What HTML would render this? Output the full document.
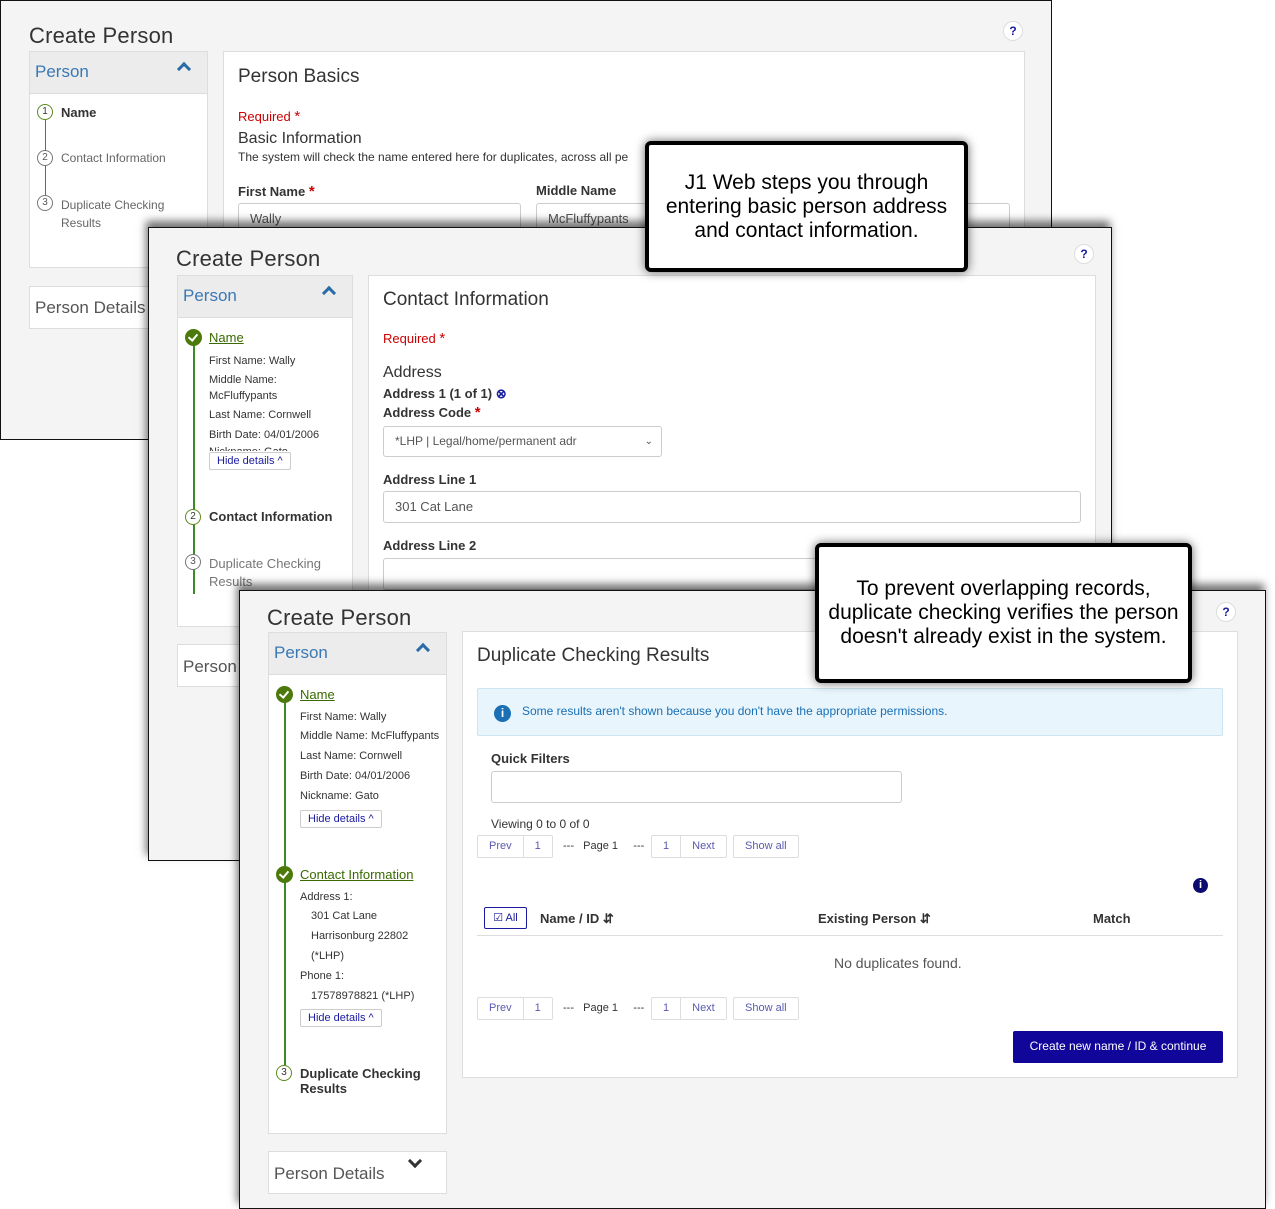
<!DOCTYPE html>
<html><head><meta charset="utf-8"><style>
*{box-sizing:border-box;margin:0;padding:0}
body{width:1275px;height:1208px;background:#fff;position:relative;overflow:hidden;font-family:"Liberation Sans",sans-serif;color:#333}
.a{position:absolute;white-space:nowrap}
.panel{position:absolute;background:#f4f4f4;border:1px solid #111;overflow:hidden}
.sh{box-shadow:-2px -6px 8px rgba(0,0,0,.55)}
.title{font-size:22px;color:#333;letter-spacing:.2px}
.side{position:absolute;background:#fff;border:1px solid #ddd}
.sideh{position:absolute;left:0;right:0;top:0;height:42px;background:#ececec;border-bottom:1px solid #ddd}
.sideh span{position:absolute;left:5px;top:10px;font-size:17px;color:#3a78b5}
.car{position:absolute;right:18px;top:12px;width:10px;height:10px;border-left:3px solid #2a6aa8;border-top:3px solid #2a6aa8;transform:rotate(45deg)}
.card{position:absolute;background:#fff;border:1px solid #ddd}
.h2{font-size:19px;color:#333}
.lbl{font-size:13px;font-weight:bold;color:#333}
.inp{position:absolute;background:#fff;border:1px solid #ccc;border-radius:3px;font-size:13px;color:#555;padding-left:11px}
.req{color:#c00;font-size:13px}
.q{position:absolute;width:20px;height:20px;border-radius:50%;background:#fff;border:1px solid #ddd;color:#1a1aa0;font-weight:bold;font-size:12px;text-align:center;line-height:18px}
.num{position:absolute;width:16px;height:16px;border-radius:50%;border:1.5px solid #777;font-size:10px;text-align:center;line-height:13px;color:#555;background:#fff}
.numg{border-color:#5a8a1a;color:#333}
.chk{position:absolute;width:17px;height:17px;border-radius:50%;background:#4b7a0a}
.chk:after{content:"";position:absolute;left:5px;top:3px;width:4px;height:7px;border-right:2.5px solid #fff;border-bottom:2.5px solid #fff;transform:rotate(40deg)}
.vl{position:absolute;width:2px;background:#3a8a2a}
.sm{font-size:11px;color:#333}
.lnk{color:#3a6a00;text-decoration:underline;font-size:13px}
.hd{position:absolute;border:1px solid #ccc;border-radius:2px;background:#fff;font-size:11px;color:#1a1aa0;padding:2px 7px;white-space:nowrap}
.pd{position:absolute;background:#fff;border:1px solid #ddd;font-size:17px;color:#555}
.callout{position:absolute;background:#fff;border:4px solid #000;border-radius:6px;box-shadow:0 0 10px rgba(0,0,0,.6);font-size:21px;color:#000;text-align:center;line-height:24px;display:flex;align-items:center;justify-content:center}
.pg{position:absolute;height:23px;border:1px solid #ddd;border-radius:2px;background:#fff;font-size:11px;color:#5a5ab0;display:flex}
.pg span{padding:0 11px;line-height:21px;border-right:1px solid #ddd}
.pg span:last-child{border-right:0}
</style></head><body>

<!-- PANEL 1 -->
<div class="panel" style="left:0;top:0;width:1052px;height:440px">
 <div class="a title" style="left:28px;top:22px">Create Person</div>
 <div class="q" style="left:1002px;top:20px">?</div>
 <div class="side" style="left:28px;top:50px;width:179px;height:217px">
  <div class="sideh"><span>Person</span><div class="car"></div></div>
  <div class="vl" style="left:15px;top:68px;height:90px;width:1px"></div>
  <div class="num numg" style="left:7px;top:52px">1</div>
  <div class="a" style="left:31px;top:53px;font-size:13px;font-weight:bold">Name</div>
  <div class="num" style="left:7px;top:98px">2</div>
  <div class="a" style="left:31px;top:99px;font-size:12px;color:#666">Contact Information</div>
  <div class="num" style="left:7px;top:143px">3</div>
  <div class="a" style="left:31px;top:144px;font-size:12px;color:#666;line-height:18px">Duplicate Checking<br>Results</div>
 </div>
 <div class="pd" style="left:28px;top:285px;width:130px;height:43px"><span class="a" style="left:5px;top:11px">Person Details</span></div>
 <div class="card" style="left:222px;top:50px;width:802px;height:400px">
  <div class="a h2" style="left:14px;top:14px">Person Basics</div>
  <div class="a req" style="left:14px;top:56px">Required <span style="font-size:15px">*</span></div>
  <div class="a" style="left:14px;top:78px;font-size:16px">Basic Information</div>
  <div class="a" style="left:14px;top:98px;font-size:12px">The system will check the name entered here for duplicates, across all pe</div>
  <div class="a lbl" style="left:14px;top:131px">First Name <span class="req" style="font-size:15px">*</span></div>
  <div class="a lbl" style="left:312px;top:131px">Middle Name</div>
  <div class="inp" style="left:14px;top:151px;width:283px;height:32px;line-height:30px">Wally</div>
  <div class="inp" style="left:312px;top:151px;width:474px;height:32px;line-height:30px">McFluffypants</div>
 </div>
</div>

<!-- PANEL 2 -->
<div class="panel sh" style="left:148px;top:227px;width:964px;height:634px">
 <div class="a title" style="left:27px;top:18px">Create Person</div>
 <div class="q" style="left:925px;top:16px">?</div>
 <div class="side" style="left:28px;top:47px;width:176px;height:352px">
  <div class="sideh"><span>Person</span><div class="car"></div></div>
  <div class="vl" style="left:15px;top:68px;height:250px"></div>
  <div class="chk" style="left:7px;top:53px"></div>
  <div class="a lnk" style="left:31px;top:54px">Name</div>
  <div class="a sm" style="left:31px;top:77px;line-height:16px">First Name: Wally</div>
  <div class="a sm" style="left:31px;top:96px;line-height:16px">Middle Name:<br>McFluffypants</div>
  <div class="a sm" style="left:31px;top:133px">Last Name: Cornwell</div>
  <div class="a sm" style="left:31px;top:153px">Birth Date: 04/01/2006</div>
  <div class="a sm" style="left:31px;top:170px;height:5px;overflow:hidden">Nickname: Gato</div>
  <div class="hd" style="left:31px;top:176px">Hide details ^</div>
  <div class="num numg" style="left:7px;top:233px">2</div>
  <div class="a" style="left:31px;top:233px;font-size:13px;font-weight:bold">Contact Information</div>
  <div class="num" style="left:7px;top:278px">3</div>
  <div class="a" style="left:31px;top:279px;font-size:13px;color:#777;line-height:18px">Duplicate Checking<br>Results</div>
 </div>
 <div class="pd" style="left:28px;top:416px;width:100px;height:43px"><span class="a" style="left:5px;top:12px">Person</span></div>
 <div class="card" style="left:219px;top:47px;width:728px;height:600px">
  <div class="a h2" style="left:14px;top:13px">Contact Information</div>
  <div class="a req" style="left:14px;top:54px">Required <span style="font-size:15px">*</span></div>
  <div class="a" style="left:14px;top:88px;font-size:16px">Address</div>
  <div class="a lbl" style="left:14px;top:110px">Address 1 (1 of 1) <span style="color:#1a1aa0">&#8855;</span></div>
  <div class="a lbl" style="left:14px;top:128px">Address Code <span class="req" style="font-size:15px">*</span></div>
  <div class="inp" style="left:14px;top:150px;width:279px;height:31px;line-height:29px;font-size:12px">*LHP | Legal/home/permanent adr<span class="a" style="right:8px;top:0;font-size:10px">&#8964;</span></div>
  <div class="a lbl" style="left:14px;top:196px">Address Line 1</div>
  <div class="inp" style="left:14px;top:215px;width:698px;height:32px;line-height:30px">301 Cat Lane</div>
  <div class="a lbl" style="left:14px;top:262px">Address Line 2</div>
  <div class="inp" style="left:14px;top:282px;width:698px;height:32px"></div>
 </div>
</div>

<!-- PANEL 3 -->
<div class="panel sh" style="left:239px;top:590px;width:1027px;height:619px">
 <div class="a title" style="left:27px;top:14px">Create Person</div>
 <div class="q" style="left:976px;top:11px">?</div>
 <div class="side" style="left:28px;top:41px;width:179px;height:502px">
  <div class="sideh"><span>Person</span><div class="car"></div></div>
  <div class="vl" style="left:15px;top:68px;height:372px"></div>
  <div class="chk" style="left:7px;top:53px"></div>
  <div class="a lnk" style="left:31px;top:54px">Name</div>
  <div class="a sm" style="left:31px;top:78px">First Name: Wally</div>
  <div class="a sm" style="left:31px;top:97px">Middle Name: McFluffypants</div>
  <div class="a sm" style="left:31px;top:117px">Last Name: Cornwell</div>
  <div class="a sm" style="left:31px;top:137px">Birth Date: 04/01/2006</div>
  <div class="a sm" style="left:31px;top:157px">Nickname: Gato</div>
  <div class="hd" style="left:31px;top:177px">Hide details ^</div>
  <div class="chk" style="left:7px;top:233px"></div>
  <div class="a lnk" style="left:31px;top:234px">Contact Information</div>
  <div class="a sm" style="left:31px;top:258px">Address 1:</div>
  <div class="a sm" style="left:42px;top:277px">301 Cat Lane</div>
  <div class="a sm" style="left:42px;top:297px">Harrisonburg 22802</div>
  <div class="a sm" style="left:42px;top:317px">(*LHP)</div>
  <div class="a sm" style="left:31px;top:337px">Phone 1:</div>
  <div class="a sm" style="left:42px;top:357px">17578978821 (*LHP)</div>
  <div class="hd" style="left:31px;top:376px">Hide details ^</div>
  <div class="num numg" style="left:7px;top:432px">3</div>
  <div class="a" style="left:31px;top:433px;font-size:13px;font-weight:bold;line-height:15px">Duplicate Checking<br>Results</div>
 </div>
 <div class="pd" style="left:28px;top:560px;width:179px;height:43px"><span class="a" style="left:5px;top:12px">Person Details</span><span class="a" style="left:141px;top:4px;width:10px;height:10px;border-right:3px solid #333;border-bottom:3px solid #333;transform:rotate(45deg)"></span></div>
 <div class="card" style="left:222px;top:40px;width:776px;height:447px">
  <div class="a h2" style="left:14px;top:13px">Duplicate Checking Results</div>
  <div class="a" style="left:14px;top:56px;width:746px;height:48px;background:#e8f5fc;border:1px solid #cde5f0;border-radius:2px">
   <div class="a" style="left:16px;top:16px;width:17px;height:17px;border-radius:50%;background:#1a6fb5;color:#fff;font-size:12px;font-weight:bold;text-align:center;line-height:17px">i</div>
   <div class="a" style="left:44px;top:15px;font-size:12px;color:#1a6fb5">Some results aren't shown because you don't have the appropriate permissions.</div>
  </div>
  <div class="a lbl" style="left:28px;top:119px">Quick Filters</div>
  <div class="inp" style="left:28px;top:139px;width:411px;height:32px"></div>
  <div class="a" style="left:28px;top:185px;font-size:12px">Viewing 0 to 0 of 0</div>
  <div class="pg" style="left:14px;top:203px"><span>Prev</span><span>1</span></div>
  <div class="a" style="left:100px;top:208px;font-size:11px;color:#333">---&nbsp;&nbsp; Page 1&nbsp;&nbsp;&nbsp;&nbsp; ---</div>
  <div class="pg" style="left:188px;top:203px"><span>1</span><span>Next</span></div>
  <div class="pg" style="left:270px;top:203px"><span>Show all</span></div>
  <div class="a" style="left:730px;top:246px;width:15px;height:15px;border-radius:50%;background:#0b0b70;color:#fff;font-size:11px;font-weight:bold;text-align:center;line-height:15px">i</div>
  <div class="a" style="left:21px;top:275px;width:43px;height:22px;border:1px solid #1a1aa0;border-radius:2px;font-size:11px;color:#1a1aa0;text-align:center;line-height:20px">&#9745; All</div>
  <div class="a lbl" style="left:77px;top:279px">Name / ID &#8693;</div>
  <div class="a lbl" style="left:355px;top:279px">Existing Person &#8693;</div>
  <div class="a lbl" style="left:630px;top:279px">Match</div>
  <div class="a" style="left:14px;top:303px;width:746px;height:1px;background:#ddd"></div>
  <div class="a" style="left:371px;top:323px;font-size:14px;color:#555">No duplicates found.</div>
  <div class="pg" style="left:14px;top:365px"><span>Prev</span><span>1</span></div>
  <div class="a" style="left:100px;top:370px;font-size:11px;color:#333">---&nbsp;&nbsp; Page 1&nbsp;&nbsp;&nbsp;&nbsp; ---</div>
  <div class="pg" style="left:188px;top:365px"><span>1</span><span>Next</span></div>
  <div class="pg" style="left:270px;top:365px"><span>Show all</span></div>
  <div class="a" style="left:550px;top:399px;width:210px;height:32px;background:#10069a;border-radius:2px;color:#fff;font-size:12px;text-align:center;line-height:30px">Create new name / ID &amp; continue</div>
 </div>
</div>

<!-- CALLOUTS -->
<div class="callout" style="left:645px;top:141px;width:323px;height:131px">J1 Web steps you through<br>entering basic person address<br>and contact information.</div>
<div class="callout" style="left:815px;top:543px;width:377px;height:140px">To prevent overlapping records,<br>duplicate checking verifies the person<br>doesn't already exist in the system.</div>

</body></html>
